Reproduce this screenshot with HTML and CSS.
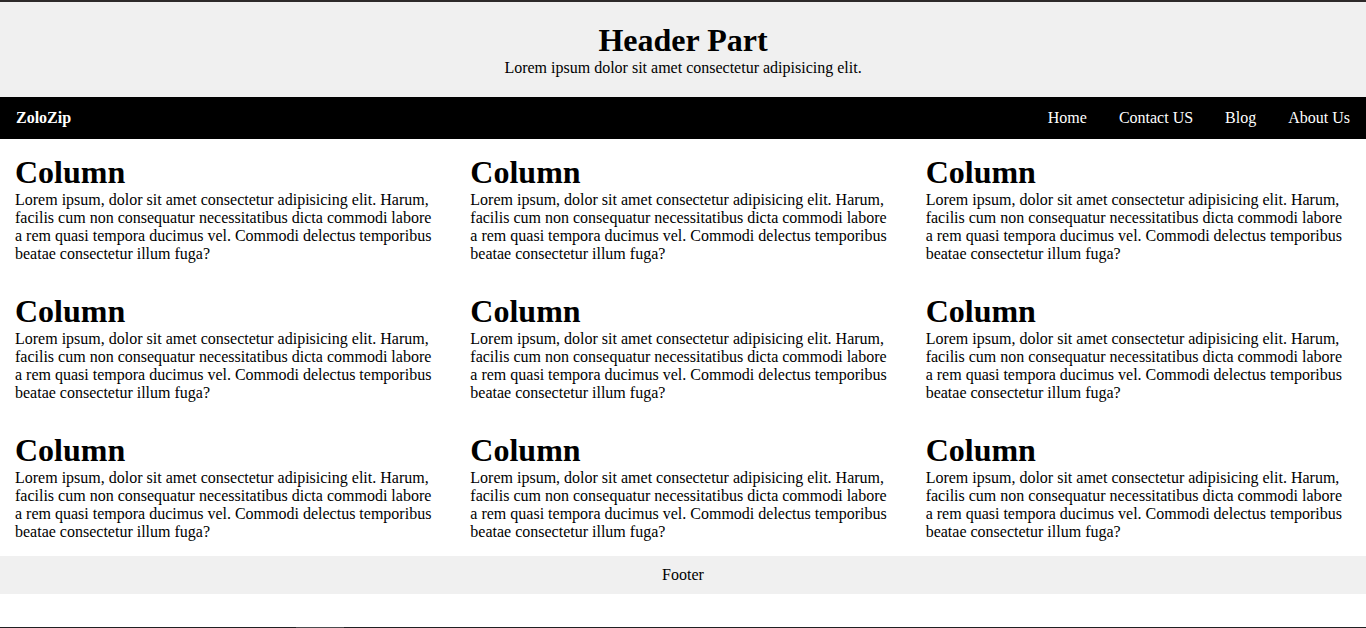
FILE: index.html
```html
<!DOCTYPE html>
<html lang="en">
<head>
  <meta charset="utf-8">
  <meta name="viewport" content="width=device-width, initial-scale=1">
  <title>ZoloZip</title>
  <link rel="stylesheet" href="styles.css">
</head>
<body>
  <header class="header">
    <h1>Header Part</h1>
    <p>Lorem ipsum dolor sit amet consectetur adipisicing elit.</p>
  </header>
  <nav class="topnav">
    <a class="brand" href="#">ZoloZip</a>
    <div class="links">
      <a href="#">Home</a>
      <a href="#">Contact US</a>
      <a href="#">Blog</a>
      <a href="#">About Us</a>
    </div>
  </nav>
  <main class="row">
    <section class="column">
      <h1>Column</h1>
      <p>Lorem ipsum, dolor sit amet consectetur adipisicing elit. Harum, facilis cum non consequatur necessitatibus dicta commodi labore a rem quasi tempora ducimus vel. Commodi delectus temporibus beatae consectetur illum fuga?</p>
    </section>
    <section class="column">
      <h1>Column</h1>
      <p>Lorem ipsum, dolor sit amet consectetur adipisicing elit. Harum, facilis cum non consequatur necessitatibus dicta commodi labore a rem quasi tempora ducimus vel. Commodi delectus temporibus beatae consectetur illum fuga?</p>
    </section>
    <section class="column">
      <h1>Column</h1>
      <p>Lorem ipsum, dolor sit amet consectetur adipisicing elit. Harum, facilis cum non consequatur necessitatibus dicta commodi labore a rem quasi tempora ducimus vel. Commodi delectus temporibus beatae consectetur illum fuga?</p>
    </section>
    <section class="column">
      <h1>Column</h1>
      <p>Lorem ipsum, dolor sit amet consectetur adipisicing elit. Harum, facilis cum non consequatur necessitatibus dicta commodi labore a rem quasi tempora ducimus vel. Commodi delectus temporibus beatae consectetur illum fuga?</p>
    </section>
    <section class="column">
      <h1>Column</h1>
      <p>Lorem ipsum, dolor sit amet consectetur adipisicing elit. Harum, facilis cum non consequatur necessitatibus dicta commodi labore a rem quasi tempora ducimus vel. Commodi delectus temporibus beatae consectetur illum fuga?</p>
    </section>
    <section class="column">
      <h1>Column</h1>
      <p>Lorem ipsum, dolor sit amet consectetur adipisicing elit. Harum, facilis cum non consequatur necessitatibus dicta commodi labore a rem quasi tempora ducimus vel. Commodi delectus temporibus beatae consectetur illum fuga?</p>
    </section>
    <section class="column">
      <h1>Column</h1>
      <p>Lorem ipsum, dolor sit amet consectetur adipisicing elit. Harum, facilis cum non consequatur necessitatibus dicta commodi labore a rem quasi tempora ducimus vel. Commodi delectus temporibus beatae consectetur illum fuga?</p>
    </section>
    <section class="column">
      <h1>Column</h1>
      <p>Lorem ipsum, dolor sit amet consectetur adipisicing elit. Harum, facilis cum non consequatur necessitatibus dicta commodi labore a rem quasi tempora ducimus vel. Commodi delectus temporibus beatae consectetur illum fuga?</p>
    </section>
    <section class="column">
      <h1>Column</h1>
      <p>Lorem ipsum, dolor sit amet consectetur adipisicing elit. Harum, facilis cum non consequatur necessitatibus dicta commodi labore a rem quasi tempora ducimus vel. Commodi delectus temporibus beatae consectetur illum fuga?</p>
    </section>
  </main>
  <footer class="footer">Footer</footer>
  <div class="edge"><div class="edge-mark"></div></div>
</body>
</html>
```

FILE: styles.css
```css
* {
  box-sizing: border-box;
  margin: 0;
  padding: 0;
}

body {
  display: flex;
  flex-direction: column;
  min-height: 100vh;
  border-top: 2px solid #2d2a2a;
  background: #fff;
  color: #000;
  font: 16px/18px "Liberation Serif", "Times New Roman", serif;
}

h1 {
  font-size: 32px;
  line-height: 37px;
}

.header {
  padding: 20px;
  background: #f0f0f0;
  text-align: center;
}

.topnav {
  display: flex;
  justify-content: space-between;
  background: #000;
}

.topnav a {
  display: block;
  padding: 12px 16px;
  color: #fff;
  text-decoration: none;
}

.topnav .brand {
  font-weight: bold;
}

.links {
  display: flex;
}

.row {
  display: grid;
  grid-template-columns: repeat(3, 1fr);
}

.column {
  padding: 15px;
}

.footer {
  padding: 10px;
  background: #f0f0f0;
  text-align: center;
}

/* Thin rule along the bottom of the window, with a lighter segment */
.edge {
  margin-top: auto;
  padding-left: 296px;
  background: #202022;
}

.edge-mark {
  width: 48px;
  height: 1px;
  background: #4c4c4e;
}
```
